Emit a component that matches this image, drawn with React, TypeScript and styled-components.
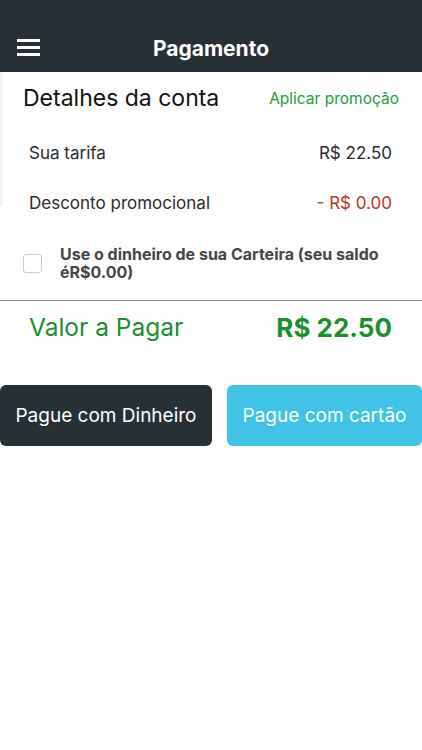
import React from 'react';
import styled, { createGlobalStyle } from 'styled-components';

const GlobalStyle = createGlobalStyle`
  html, body {
    margin: 0;
    padding: 0;
    background: #ffffff;
    font-family: Inter, "Noto Sans", sans-serif;
  }
`;

const Page = styled.div`
  width: 422px;
  height: 750px;
  overflow: hidden;
  background: #ffffff;
`;

const Header = styled.div`
  height: 72px;
  box-sizing: border-box;
  padding-top: 24px;
  background: #263035;
`;

const HeaderBar = styled.div`
  height: 48px;
  display: flex;
  align-items: center;
  justify-content: center;
  position: relative;
`;

const MenuButton = styled.div`
  position: absolute;
  left: 17px;
  top: 15px;
  width: 23px;
  display: flex;
  flex-direction: column;
  gap: 4.5px;
`;

const MenuLine = styled.span`
  display: block;
  height: 2.5px;
  background: #ffffff;
`;

const Title = styled.div`
  color: #ffffff;
  font-size: 21px;
  font-weight: 700;
`;

const Body = styled.div`
  position: relative;
`;

const EdgeShadow = styled.div`
  position: absolute;
  left: 0;
  top: 0;
  width: 5px;
  height: 134px;
  background: linear-gradient(to right, rgba(0, 0, 0, 0.06), rgba(0, 0, 0, 0));
`;

const SectionHead = styled.div`
  display: flex;
  justify-content: space-between;
  align-items: center;
  padding: 11px 23px 0 23px;
  height: 30px;
`;

const SectionTitle = styled.div`
  font-size: 23px;
  color: #111111;
`;

const PromoLink = styled.div`
  font-size: 15.5px;
  color: #279a3a;
`;

const Rows = styled.div`
  padding: 15px 30px 0 29px;
  display: flex;
  flex-direction: column;
`;

const Row = styled.div`
  height: 50px;
  display: flex;
  justify-content: space-between;
  align-items: center;
  font-size: 17px;
  color: #2b2b2b;
`;

const Amount = styled.span<{ $tone?: 'red' }>`
  color: ${(p) => (p.$tone === 'red' ? '#b23a2a' : '#2b2b2b')};
`;

const WalletRow = styled.label`
  display: flex;
  align-items: center;
  gap: 18px;
  padding: 15px 30px 0 23px;
  height: 40px;
`;

const Checkbox = styled.span`
  flex: none;
  width: 17px;
  height: 17px;
  border: 1.5px solid #c9c9c9;
  border-radius: 3px;
`;

const WalletText = styled.div`
  font-size: 16px;
  font-weight: 700;
  line-height: 18px;
  color: #454545;
`;

const Divider = styled.hr`
  margin: 17px 0 0 0;
  border: none;
  border-top: 1px solid #8a8a8a;
`;

const TotalRow = styled.div`
  display: flex;
  justify-content: space-between;
  align-items: center;
  padding: 0 30px 0 29px;
  height: 52px;
  color: #1a8f2e;
  font-size: 24.5px;
`;

const TotalValue = styled.span`
  font-size: 26px;
  font-weight: 700;
`;

const Buttons = styled.div`
  display: flex;
  gap: 15px;
  margin-top: 32px;
`;

const PayButton = styled.button<{ $variant: 'dark' | 'cyan' }>`
  flex: none;
  width: ${(p) => (p.$variant === 'dark' ? '212px' : '195px')};
  height: 61px;
  padding: 0;
  border: none;
  border-radius: 6px;
  font-family: inherit;
  font-size: 19px;
  color: #ffffff;
  background: ${(p) => (p.$variant === 'dark' ? '#263035' : '#40c3e6')};
`;

export default function App() {
  return (
    <Page>
      <GlobalStyle />
      <Header>
        <HeaderBar>
          <MenuButton>
            <MenuLine />
            <MenuLine />
            <MenuLine />
          </MenuButton>
          <Title>Pagamento</Title>
        </HeaderBar>
      </Header>
      <Body>
        <EdgeShadow />
        <SectionHead>
          <SectionTitle>Detalhes da conta</SectionTitle>
          <PromoLink>Aplicar promoção</PromoLink>
        </SectionHead>
        <Rows>
          <Row>
            <span>Sua tarifa</span>
            <Amount>R$ 22.50</Amount>
          </Row>
          <Row>
            <span>Desconto promocional</span>
            <Amount $tone="red">- R$ 0.00</Amount>
          </Row>
        </Rows>
        <WalletRow>
          <Checkbox />
          <WalletText>Use o dinheiro de sua Carteira (seu saldo éR$0.00)</WalletText>
        </WalletRow>
        <Divider />
        <TotalRow>
          <span>Valor a Pagar</span>
          <TotalValue>R$ 22.50</TotalValue>
        </TotalRow>
        <Buttons>
          <PayButton $variant="dark">Pague com Dinheiro</PayButton>
          <PayButton $variant="cyan">Pague com cartão</PayButton>
        </Buttons>
      </Body>
    </Page>
  );
}
